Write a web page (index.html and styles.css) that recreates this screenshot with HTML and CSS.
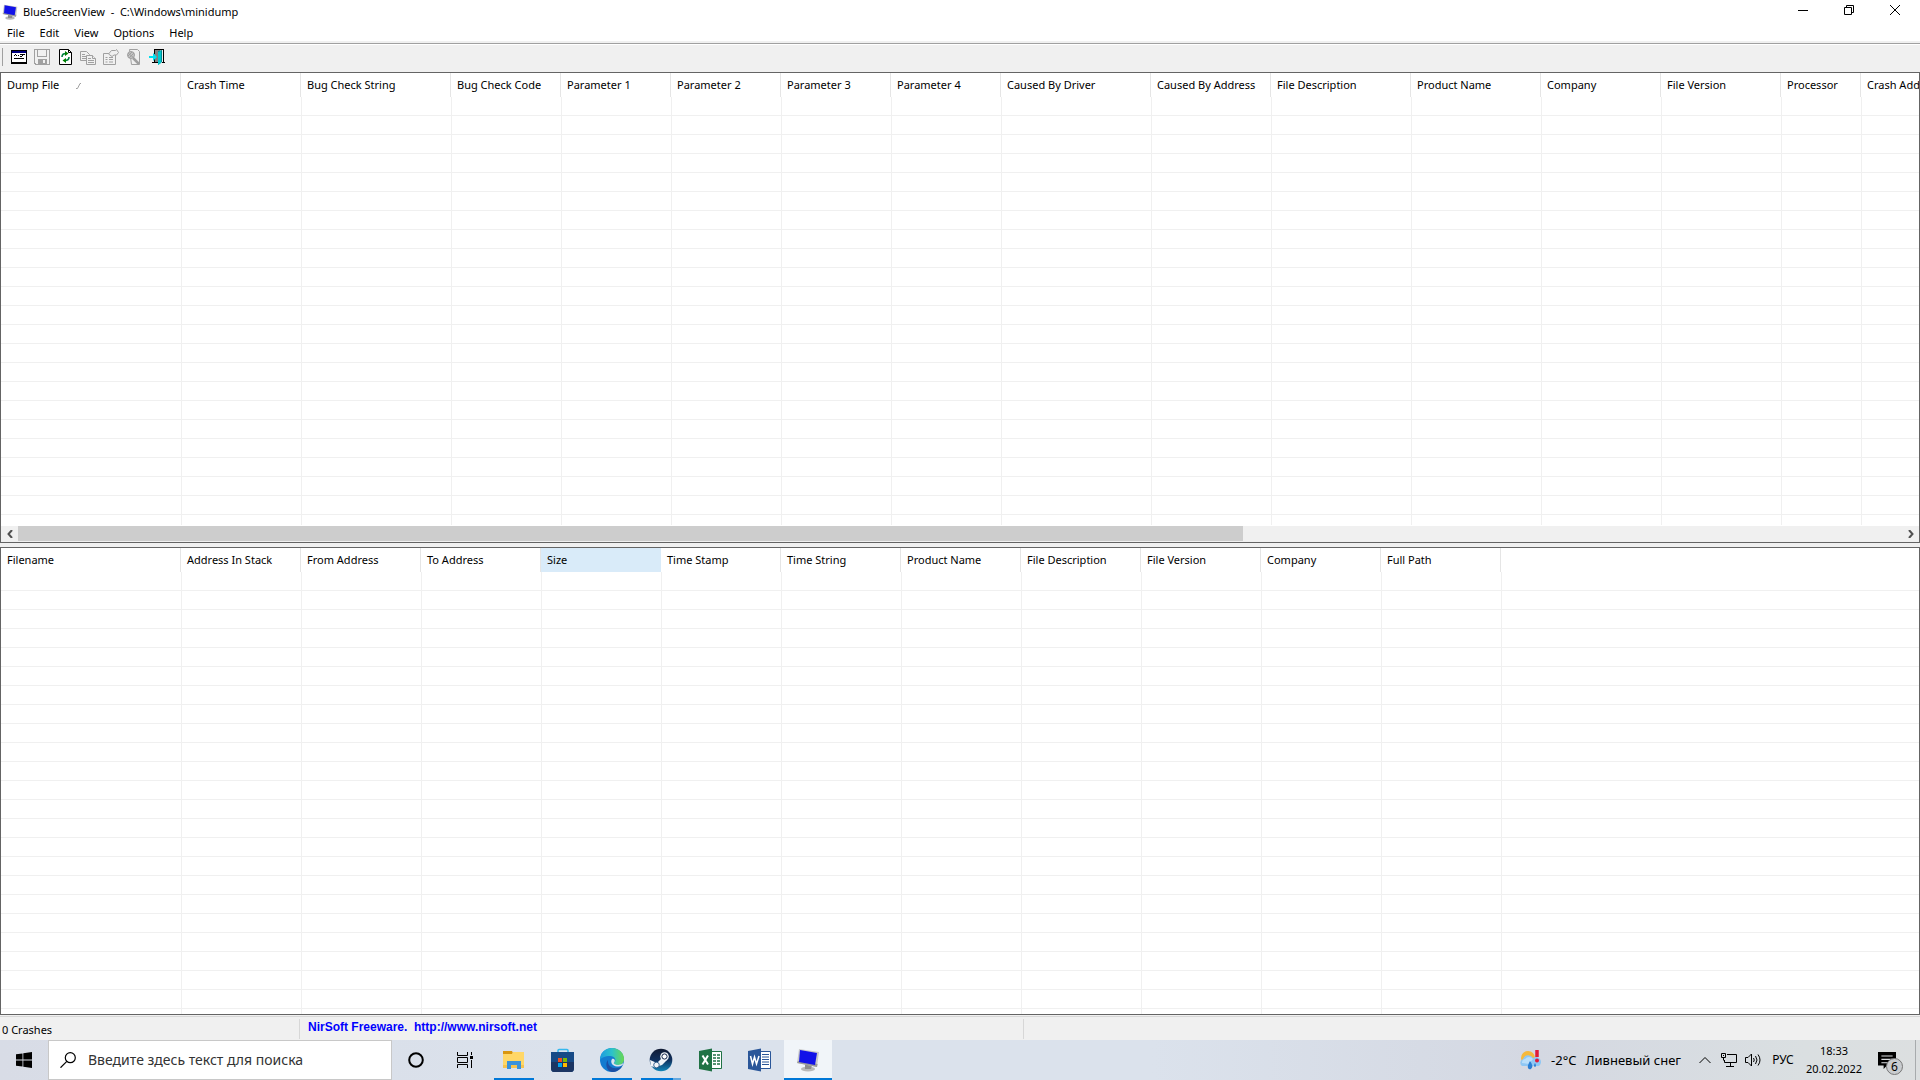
FILE: index.html
```html
<!DOCTYPE html>
<html lang="ru">
<head>
<meta charset="utf-8">
<title>BlueScreenView</title>
<link rel="stylesheet" href="styles.css">
</head>
<body>
<svg class="defs" aria-hidden="true">
  <symbol id="monitor" viewBox="0 0 24 24">
    <ellipse cx="12" cy="21" rx="7" ry="2.6" fill="#b9b9b9"/>
    <path d="M9 16l7 1-1 4H9z" fill="#8d8d8d"/>
    <path d="M3 1l20 3-2 15L1 15z" fill="#c9c9c9"/>
    <path d="M1 15l20 4 .6-3L2 13z" fill="#9a9a9a"/>
    <path d="M4 2l17 3-2 12L3 14z" fill="#1212e8"/>
  </symbol>
</svg>
<div class="desktop">
  <main class="window">
    <header class="titlebar">
      <svg class="app-icon"><use href="#monitor"/></svg>
      <h1 class="title">BlueScreenView &nbsp;- &nbsp;C:\Windows\minidump</h1>
      <div class="window-buttons">
        <button class="window-button" aria-label="Minimize"><svg viewBox="0 0 10 10"><path d="M0 5.5h10"/></svg></button>
        <button class="window-button" aria-label="Restore"><svg viewBox="0 0 10 10"><path d="M.5 2.5h7v7h-7zM2.500 2.500v-2h7v7h-2"/></svg></button>
        <button class="window-button" aria-label="Close"><svg viewBox="0 0 10 10"><path d="M0 0l10 10M10 0L0 10"/></svg></button>
      </div>
    </header>
    <nav class="menubar">
      <button>File</button><button>Edit</button><button>View</button><button>Options</button><button>Help</button>
    </nav>
    <div class="toolbar">
      <span class="grip"></span>
      <button aria-label="Advanced options"><svg viewBox="0 0 16 16" shape-rendering="crispEdges"><path fill="#fff" d="M0 1h16v13H0z"/><path fill="#000" d="M0 1h16v14H0zM1 4v9h14V4z"/><path fill="#000080" d="M1 2h14v2H1z"/><path fill="#fff" d="M1 4h14v9H1z"/><path fill="#000" d="M3 6h1v1H3zM5 6h1v1H5zM7 6h1v1H7zM4 5h1v1H4zM9 5h5v1H9zM9 7h2v1H9zM11 6h1v1h-1zM3 9h10v1H3z"/></svg></button>
      <button disabled aria-label="Save"><svg viewBox="0 0 16 16" shape-rendering="crispEdges"><path fill="#a0a0a0" d="M0 0h16v16H1l-1-1zM1 1v13h1v1h2v-5h9v5h2V1h-2v7H3V1zM4 1v6h8V1zM9 11v3h2v-3z" fill-rule="evenodd"/></svg></button>
      <button aria-label="Refresh"><svg viewBox="0 0 16 16"><path fill="#fff" stroke="#000" d="M2.500.5h9l3 3v12h-12z"/><path fill="none" stroke="#000" d="M11.500.5v3h3"/><path fill="none" stroke="#008040" stroke-width="1.600" d="M5 8c0-3 1.500-3.500 4-3.500M12 8c0 3-1.500 3.500-4 3.500"/><path fill="#008000" d="M8 2l3.500 2.500L8 7zM9 9l-3.500 2.500L9 14z"/></svg></button>
      <button disabled aria-label="Copy"><svg viewBox="0 0 16 16"><g fill="#f0f0f0" stroke="#a0a0a0"><path d="M.5 2.500h6l3 3v6h-9z"/><path d="M6.500 6.500h6l3 3v6h-9z"/><path d="M2 5.500h3M2 7.500h4M2 9.500h4M8 9.500h3M8 11.500h6M8 13.500h6M12.500 6.500v3h3"/></g></svg></button>
      <button disabled aria-label="Properties"><svg viewBox="0 0 16 16"><g fill="#f0f0f0" stroke="#a0a0a0"><path d="M.5 4.500h12v11H.5z"/><path d="M2.500 8.500h2M6 8.500h4M2.500 10.500h2M6 10.500h4M2.500 13h2M6 13h4"/><path d="M5.500 5l3-3.500h4l1-1 2 3-2 2.500H11L9 7.500z"/></g></svg></button>
      <button disabled aria-label="Find"><svg viewBox="0 0 16 16"><g fill="#f0f0f0" stroke="#a0a0a0"><path d="M3.500.5h8l2 2v13h-8z"/><circle cx="5" cy="6" r="3.500" fill="#c4c4c4"/><path d="M2 4l6 5M2 7l4-4M3 9l5-5"/><path stroke-width="2.500" d="M7 9l6 6"/></g></svg></button>
      <button aria-label="Exit"><svg viewBox="0 0 16 16"><path fill="#808080" d="M5 1h6v12H5z"/><path fill="#000" d="M5 0h10v1H5zM5 1h1v4H5zM5 10h1v4H5zM3 13h6v1H3zM13 13h3v1h-3zM14 1h1v13h-1z"/><path fill="#008c94" d="M9 2l4-1v12l-4 3z"/><path fill="#00c8d0" d="M9 3l3-1v12l-3 2z"/><path fill="#00e0f0" d="M0 7h4V4l4 4-4 4V9H0z"/></svg></button>
    </div>

    <section class="pane pane-crashes" aria-label="Crashes">
      <table class="list">
        <colgroup><col class="w180"><col class="w120"><col class="w150"><col class="w110"><col class="w110"><col class="w110"><col class="w110"><col class="w110"><col class="w150"><col class="w120"><col class="w140"><col class="w130"><col class="w120"><col class="w120"><col class="w80"><col></colgroup>
        <thead><tr><th>Dump File<svg class="sort" viewBox="0 0 6 6"><path d="M0 5.500h1.500L4 .5h1"/></svg></th><th>Crash Time</th><th>Bug Check String</th><th>Bug Check Code</th><th>Parameter 1</th><th>Parameter 2</th><th>Parameter 3</th><th>Parameter 4</th><th>Caused By Driver</th><th>Caused By Address</th><th>File Description</th><th>Product Name</th><th>Company</th><th>File Version</th><th>Processor</th><th>Crash Address</th></tr></thead>
        <tbody><tr><td></td><td></td><td></td><td></td><td></td><td></td><td></td><td></td><td></td><td></td><td></td><td></td><td></td><td></td><td></td><td></td></tr></tbody>
      </table>
      <div class="scrollbar">
        <button aria-label="Scroll left"><svg viewBox="0 0 6 8"><path d="M5 0L1.500 4 5 8"/></svg></button>
        <div class="track"><div class="thumb"></div></div>
        <button aria-label="Scroll right"><svg viewBox="0 0 6 8"><path d="M1 0l3.500 4L1 8"/></svg></button>
      </div>
    </section>

    <section class="pane pane-drivers" aria-label="Drivers">
      <table class="list">
        <colgroup><col class="w180"><col class="w120"><col class="w120"><col class="w120"><col class="w120"><col class="w120"><col class="w120"><col class="w120"><col class="w120"><col class="w120"><col class="w120"><col class="w120"><col></colgroup>
        <thead><tr><th>Filename</th><th>Address In Stack</th><th>From Address</th><th>To Address</th><th class="hot">Size</th><th>Time Stamp</th><th>Time String</th><th>Product Name</th><th>File Description</th><th>File Version</th><th>Company</th><th>Full Path</th><th></th></tr></thead>
        <tbody><tr><td></td><td></td><td></td><td></td><td></td><td></td><td></td><td></td><td></td><td></td><td></td><td></td><td></td></tr></tbody>
      </table>
    </section>

    <footer class="statusbar">
      <span class="status-count">0 Crashes</span>
      <span class="status-link"><a href="http://www.nirsoft.net">NirSoft Freeware. &nbsp;http://www.nirsoft.net</a></span>
      <span class="status-rest"></span>
    </footer>
  </main>

  <div class="taskbar">
    <button class="start" aria-label="Пуск"><svg viewBox="0 0 16 16" width="16" height="16"><path d="M0 2.300L6.500 1.400v6.200H0zM7.300 1.300L16 0v7.600H7.300zM0 8.400h6.500v6.200L0 13.700zM7.300 8.400H16V16l-8.700-1.300z"/></svg></button>
    <label class="search"><svg viewBox="0 0 16 16" width="16" height="16"><circle cx="10.300" cy="5.700" r="5"/><path d="M6.800 9.300L.5 15.700"/></svg><input type="text" placeholder="Введите здесь текст для поиска" aria-label="Поиск"></label>
    <div class="apps">
      <button aria-label="Cortana"><svg viewBox="0 0 24 24"><circle cx="12" cy="12" r="6.800" fill="none" stroke="#000" stroke-width="2"/></svg></button>
      <button aria-label="Task View"><svg viewBox="0 0 24 24"><path fill="none" stroke="#000" d="M4.500 4v3.500h10V4M4.500 20v-3.500h10V20M4.500 9.500h10v5h-10zM18.500 4v3M18.500 12v8"/><path d="M17 8h3v3h-3z"/></svg></button>
      <button class="running" aria-label="Explorer"><svg viewBox="0 0 24 24"><path fill="#d9960f" d="M1 3h9l1 2-1 2H1z"/><path fill="#ffd767" d="M1 6h9l1-2h11v16H1z"/><path fill="#f7c34e" d="M1 17h21v3H1z"/><path fill="#3a92dc" d="M5 21v-8h14v8h-4v-4H9v4z"/></svg></button>
      <button aria-label="Store"><svg viewBox="0 0 24 24"><path fill="none" stroke="#35b8ee" stroke-width="1.500" d="M7 5V2.500Q7 1.500 8 1.500h8q1 0 1 1V5"/><path fill="#174a86" d="M0 4h23v16q0 4-3 4H3q-3 0-3-4z"/><path fill="#1b3563" d="M0 14h23v6q0 4-3 4H3q-3 0-3-4z"/><path fill="#f25022" d="M7 10h4v4H7z"/><path fill="#7fba00" d="M12 10h4v4h-4z"/><path fill="#00a4ef" d="M7 15h4v4H7z"/><path fill="#ffb900" d="M12 15h4v4h-4z"/></svg></button>
      <button class="running" aria-label="Edge"><svg viewBox="0 0 24 24"><defs><linearGradient id="edge-top"><stop offset="0" stop-color="#1c9be0"/><stop offset=".5" stop-color="#2cc2cb"/><stop offset="1" stop-color="#6ad94f"/></linearGradient></defs><circle cx="12" cy="12" r="12" fill="#137bd0"/><path fill="url(#edge-top)" d="M0 12C0 4 6 0 12 0c7 0 12 5 12 11 0 4-3 6-6 6-3 0-4.500-1-4-2 3-3 1-7-4-7-5 0-9 2-10 4z"/><path fill="#1c4fa4" d="M8 12c-1 6 5 9 9 8 2 0 4-1 5-2-2 4-6 6-10 6-6-1-7-9-4-12z"/><path fill="#dce3ec" d="M12 11c-2 3 0 7 5 7.500 2 0 4-.5 5.500-1.500 1-1 1-2 0-1.500-3 2-6 1.500-8 .5-1-.5-1-1 0-2 1-2-.5-4-2.500-3z"/></svg></button>
      <button class="running grouped" aria-label="Steam"><svg viewBox="0 0 24 24"><defs><linearGradient id="steam-bg" x2="0" y2="1"><stop offset="0" stop-color="#111b33"/><stop offset=".5" stop-color="#10305d"/><stop offset="1" stop-color="#1387b8"/></linearGradient></defs><circle cx="12" cy="12" r="11.300" fill="url(#steam-bg)"/><path fill="#f2f5f7" d="M1 12l7 3 4-4 5-1 1 2-5 5-3 1-3 2-5-2z"/><circle cx="15.500" cy="8.500" r="4.300" fill="#f2f5f7"/><circle cx="15.500" cy="8.500" r="2.600" fill="#fff" stroke="#14264b"/><circle cx="7.500" cy="17" r="2.800" fill="#f2f5f7" stroke="#14467a" stroke-width=".8"/></svg></button>
      <button aria-label="Excel"><svg viewBox="0 0 24 24"><path fill="#fff" stroke="#207245" d="M13 3.500h10.500v17H13z"/><path stroke="#207245" stroke-width="1.500" d="M15 7h3M19 7h3M15 10h3M19 10h3M15 13h3M19 13h3M15 16h3M19 16h3"/><path fill="#207245" d="M1 3l13-2.500v23L1 21z"/><path stroke="#fff" stroke-width="2" d="M4.500 7.500l5.500 9M10 7.500l-5.500 9"/></svg></button>
      <button aria-label="Word"><svg viewBox="0 0 24 24"><path fill="#fff" stroke="#2a5699" d="M13 3.500h10.500v17H13z"/><path stroke="#2a5699" d="M15 6.500h7M15 9h7M15 11.500h7M15 14h7M15 16.500h7"/><path fill="#2a5699" d="M1 3l13-2.500v23L1 21z"/><path fill="none" stroke="#fff" stroke-width="1.500" d="M3.500 8l2 8 2-7 2 7L12 8"/></svg></button>
      <button class="running active" aria-label="BlueScreenView"><svg><use href="#monitor"/></svg></button>
    </div>
    <div class="tray">
      <button class="weather"><svg viewBox="0 0 22 20" width="22" height="20"><circle cx="8" cy="8" r="7" fill="#f6b93b"/><path fill="#8fc7f4" d="M2 16a4 4 0 0 1 1-7 5.500 5.500 0 0 1 10-1 4.500 4.500 0 0 1 6 8z"/><path fill="#b9defa" d="M2 13a4 4 0 0 1 3-4 5 5 0 0 1 8 0l-4 5z"/><path fill="#2b7fd4" d="M10 11q4 5 1 8-2 1-3-1-1-2 2-7zM15 13q2 3 0 4-2-1 0-4z"/><path stroke="#e01b38" stroke-width="3.500" d="M17 0v7"/><circle cx="17" cy="10.500" r="2" fill="#e01b38"/></svg><span>-2°C</span><span>Ливневый снег</span></button>
      <button class="chevron" aria-label="Hidden icons"><svg viewBox="0 0 12 8" width="12" height="8"><path d="M.5 7L6 1.500 11.500 7"/></svg></button>
      <button class="network" aria-label="Network"><svg viewBox="0 0 16 14" width="16" height="14"><path d="M6 1.500h9.500v8H3.500V7M.5.500h4v4h-4zM2.500 4.500v3M9.500 10v3M5 13.500h8M2 2.500h1"/></svg></button>
      <button class="volume" aria-label="Volume"><svg viewBox="0 0 16 14" width="16" height="14"><path d="M.5 4.500H3L6.500 1v12L3 9.500H.5zM8.500 5q1.500 2 0 4M10.500 3q3 4 0 8M13 1.500q4 5.500 0 11"/></svg></button>
      <button class="lang">РУС</button>
      <button class="clock"><span>18:33</span><span>20.02.2022</span></button>
      <button class="notify" aria-label="Notifications"><svg viewBox="0 0 16 15" width="16" height="15"><path d="M0 0h16v12H8l-3 3v-3H0z"/><path stroke="#dcdfe2" d="M3 3.500h10M3 6.500h10M3 9.500h6"/></svg><span class="badge">6</span></button>
      <button class="peek" aria-label="Show desktop"></button>
    </div>
  </div>
</div>
</body>
</html>
```
FILE: styles.css
```css
* { box-sizing: border-box; }
body { margin: 0; font: 11px/16px "Noto Sans", sans-serif; color: #000; }
button { margin: 0; padding: 0; border: 0; background: none; font: inherit; color: inherit; display: flex; align-items: center; justify-content: center; }
svg { display: block; }
.defs { position: absolute; width: 0; height: 0; }
.desktop { display: flex; flex-direction: column; height: 100vh; overflow: hidden; }
.window { flex: 1; min-height: 0; display: flex; flex-direction: column; background: #f0f0f0; }

.titlebar { display: flex; align-items: center; height: 23px; padding: 0 2px; background: #fff; }
.app-icon { width: 16px; height: 16px; }
.title { flex: 1; margin: 0 0 0 5px; font-size: 11px; font-weight: 400; }
.window-buttons { display: flex; align-self: stretch; }
.window-button { width: 46px; padding-bottom: 4px; }
.window-button svg { width: 10px; height: 10px; fill: none; stroke: #000; }
.menubar { display: flex; gap: 15px; height: 18px; padding: 2px 7px 0; background: #fff; }
.toolbar { display: flex; align-items: center; gap: 7px; height: 29px; margin-top: 2px; padding: 3px 2px 6px; border-top: 1px solid #a0a0a0; box-shadow: inset 0 1px #fff; }
.toolbar svg { width: 16px; height: 16px; }
.grip { width: 1px; height: 18px; margin-right: 1px; background: #a0a0a0; }

.pane { display: flex; flex-direction: column; min-height: 0; overflow: hidden; background: #fff; border: 1px solid #646464; }
.pane-crashes { flex: 471 1 0; margin-bottom: 4px; }
.pane-drivers { flex: 469 1 0; }
.list { flex: 1; min-height: 0; width: 100%; height: 100%; table-layout: fixed; border-collapse: separate; border-spacing: 0; }
.list th { height: 24px; padding: 0 0 0 6px; border-right: 1px solid #e5e5e5; text-align: left; font-weight: 400; white-space: nowrap; overflow: hidden; }
.list th:last-child { border-right: 0; }
.list .hot { background: #d9ebf9; border-color: #d9ebf9; }
.list td { padding: 0; border-left: 1px solid #f0f0f0; }
.list td:first-child { border-left: 0; }
.list tbody { background: repeating-linear-gradient(#fff 0 18px, #f0f0f0 18px 19px); }
.sort { display: inline-block; width: 6px; height: 6px; margin-left: 17px; fill: none; stroke: #a0a0a0; }
.w80 { width: 80px; }
.w110 { width: 110px; }
.w120 { width: 120px; }
.w130 { width: 130px; }
.w140 { width: 140px; }
.w150 { width: 150px; }
.w180 { width: 180px; }

.scrollbar { display: flex; flex: none; height: 17px; background: #f0f0f0; border-top: 1px solid #fff; }
.scrollbar button { width: 17px; }
.scrollbar svg { width: 6px; height: 8px; fill: none; stroke: #505050; stroke-width: 2; }
.track { flex: 1; padding-bottom: 1px; }
.thumb { width: 65%; height: 100%; background: #cdcdcd; }

.statusbar { display: flex; height: 24px; margin-top: 1px; padding: 2px 0 1px; border-top: 1px solid #d7d7d7; }
.status-count { width: 300px; padding: 3px 0 0 2px; border-right: 1px solid #d7d7d7; }
.status-link { width: 724px; padding-left: 8px; border-right: 1px solid #d7d7d7; }
.status-link a { color: #0000ff; text-decoration: none; font: bold 12px/16px "Liberation Sans", sans-serif; }

.taskbar { display: flex; flex: none; height: 40px; background: linear-gradient(90deg, #d8dce6, #dbe2ec 30%, #dbe2ec 60%, #d4d8e2 80%, #dadfe1 94%, #dcdfe0); }
.start { width: 48px; }
.search { display: flex; align-items: center; width: 344px; padding-left: 11px; background: #fff; border: 1px solid #c8c8c8; }
.search svg { margin-bottom: 1px; fill: none; stroke: #000; stroke-width: 1.2; }
.search input { flex: 1; min-width: 0; margin-left: 12px; padding: 0; border: 0; outline: 0; background: none; font: 14px/20px "Noto Sans", sans-serif; }
.search input::placeholder { color: #333; opacity: 1; }
.apps { display: flex; gap: 1px; }
.apps button { width: 48px; height: 40px; }
.apps svg { width: 24px; height: 24px; }
.running { background: linear-gradient(#0078d7, #0078d7) center bottom / 40px 2px no-repeat; }
.apps .grouped { background-image: linear-gradient(90deg, #0078d7 32px, #64a9e0 32px); }
.apps .active { background-color: #f1f5f9; background-size: 100% 2px; }

.tray { display: flex; margin-left: auto; }
.weather { gap: 9px; font-size: 13px; margin-right: 12px; }
.chevron, .network, .volume { width: 24px; }
.tray .chevron svg, .tray .network svg, .tray .volume svg { fill: none; stroke: #000; }
.lang { width: 40px; padding-right: 4px; font-size: 12px; }
.clock { flex-direction: column; width: 58px; padding: 1px 0; }
.clock span { line-height: 18px; }
.notify { position: relative; width: 52px; padding-right: 4px; }
.notify > svg { width: 18px; height: 17px; }
.badge { position: absolute; left: 23px; top: 18px; width: 17px; height: 17px; border: 1px solid #777; border-radius: 50%; background: #c9cccf; font-size: 12px; line-height: 15px; text-align: center; }
.peek { width: 5px; border-left: 1px solid #a8abad; }
```
